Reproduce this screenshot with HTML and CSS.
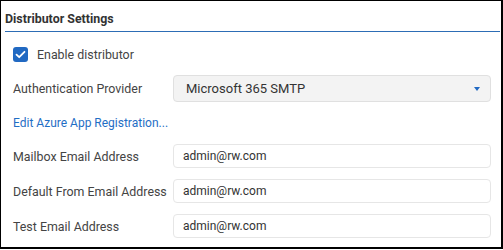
FILE: index.html
```html
<!DOCTYPE html>
<html lang="en">
<head>
  <meta charset="UTF-8">
  <title>Distributor Settings</title>
  <link rel="stylesheet" href="styles.css">
</head>
<body>
  <div class="panel">
    <header class="panel-head">
      <h2>Distributor Settings</h2>
    </header>

    <div class="panel-body">
      <label class="check-row">
        <span class="check-box">
          <svg width="11" height="9" viewBox="0 0 11 9"><path d="M1.5 4.6 L4.2 7.2 L9.5 1.8" fill="none" stroke="#fff" stroke-width="1.8" stroke-linecap="round" stroke-linejoin="round"/></svg>
        </span>
        Enable distributor
      </label>

      <div class="form-row">
        <span class="form-label">Authentication Provider</span>
        <div class="select-box">
          <span>Microsoft 365 SMTP</span>
          <span class="caret"></span>
        </div>
      </div>

      <a class="link-row" href="#">Edit Azure App Registration...</a>

      <div class="form-row tight">
        <span class="form-label">Mailbox Email Address</span>
        <div class="text-box">admin@rw.com</div>
      </div>
      <div class="form-row tight">
        <span class="form-label">Default From Email Address</span>
        <div class="text-box">admin@rw.com</div>
      </div>
      <div class="form-row tight">
        <span class="form-label">Test Email Address</span>
        <div class="text-box">admin@rw.com</div>
      </div>
    </div>
  </div>
</body>
</html>
```

FILE: styles.css
```css
body {
  margin: 0;
  font-family: Roboto, "Liberation Sans", Arial, sans-serif;
  background-color: #fff;
}
.panel {
  box-sizing: border-box;
  width: 503px;
  height: 249px;
  border: 1px solid #000;
  border-right-width: 2px;
  border-bottom-width: 2px;
  padding: 0 1px 0 4px;
}
.panel-head {
  border-bottom: 1px solid #2d6db5;
  padding: 11px 0 5px;
}
.panel-head h2 {
  margin: 0;
  font-size: 12.4px;
  line-height: 14px;
  font-weight: bold;
  color: #333;
}
.panel-body {
  padding: 14px 9px 0 8px;
}
.check-row {
  display: flex;
  align-items: center;
  gap: 9px;
  font-size: 12.4px;
  color: #444;
  height: 16px;
}
.check-box {
  width: 15px;
  height: 15px;
  border-radius: 3px;
  background-color: #2169c2;
  display: flex;
  align-items: center;
  justify-content: center;
}
.form-row {
  display: flex;
  align-items: center;
  margin-top: 13px;
}
.form-label {
  width: 160px;
  flex-shrink: 0;
  font-size: 12.4px;
  color: #444;
}
.select-box {
  box-sizing: border-box;
  flex: 1;
  height: 27px;
  display: flex;
  align-items: center;
  justify-content: space-between;
  padding: 0 10px 0 12px;
  background-color: #f3f3f3;
  border: 1px solid #e0e0e0;
  border-radius: 4px;
  font-size: 13px;
  color: #333;
}
.caret {
  width: 0;
  height: 0;
  border-left: 3px solid transparent;
  border-right: 3px solid transparent;
  border-top: 4px solid #2169c2;
}
.link-row {
  display: block;
  margin-top: 14px;
  font-size: 12px;
  color: #1f6ec5;
  text-decoration: none;
  line-height: 14px;
}
.form-row.tight {
  margin-top: 11px;
}
.link-row + .form-row.tight {
  margin-top: 14px;
}
.text-box {
  box-sizing: border-box;
  flex: 1;
  height: 24px;
  display: flex;
  align-items: center;
  padding: 0 9px;
  border: 1px solid #e6e6e6;
  border-radius: 4px;
  font-size: 12px;
  color: #333;
}
```
